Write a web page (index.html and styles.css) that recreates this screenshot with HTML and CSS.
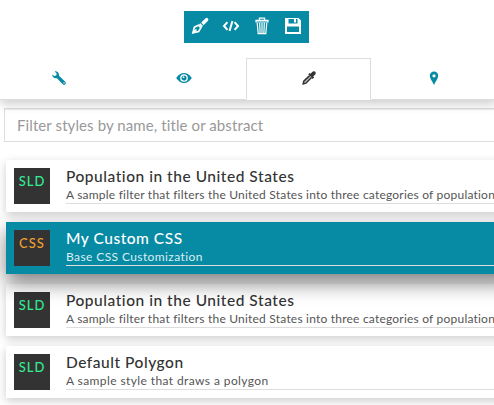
FILE: index.html
```html
<!DOCTYPE html>
<html lang="en">
<head>
<meta charset="utf-8">
<title>Styles</title>
<link rel="stylesheet" href="styles.css">
</head>
<body>
<header class="toolbar">
  <button class="tool" aria-label="Edit"><svg width="18" height="18" viewBox="0 0 18 18"><path fill="#fff" d="M10.2 5.500 14.600 1.200Q16 .3 17 1.500T16.800 4L12.500 8.200zM9.300 6.300l2.700 2.700-1.200 1.300-2.900-2.900z"/><path fill="none" stroke="#fff" stroke-width="1.700" d="M7.400 8.200 3.400 10.200 1.900 15.900 7.600 14.600 9.900 10.600zM2 16l3.500-3.500"/></svg></button>
  <button class="tool" aria-label="Code"><svg width="18" height="18" viewBox="0 0 18 18"><path fill="none" stroke="#fff" stroke-width="2" d="M5.400 5.200 2 9l3.400 3.800M12.600 5.200 16 9l-3.400 3.800M10.500 4 7.500 14"/></svg></button>
  <button class="tool" aria-label="Delete"><svg width="18" height="18" viewBox="0 0 18 18"><path fill="none" stroke="#fff" stroke-width="1.200" d="M6.400 3V1.100h5.200V3M3 5V3.400h12V5zM4.200 6l1 10.600h7.600l1-10.600M6.700 6l.4 10M9 6v10M11.300 6l-.4 10"/></svg></button>
  <button class="tool" aria-label="Save"><svg width="18" height="18" viewBox="0 0 18 18"><path fill="#fff" fill-rule="evenodd" d="M1 1h13.500L17 3.500V17H1zM4.500 2v4.500h9V2zM3 9.500V15h12V9.500z"/><path fill="#fff" d="M10 2h2v3.500h-2z"/></svg></button>
</header>
<nav class="tabs">
  <a class="tab tab-first"><svg width="16" height="16" viewBox="0 0 16 16"><path fill="#078aa3" d="M3.600 1.200C6.500.8 8.600 3.300 8 5.800l6.500 6.300q.8 1.200-.2 2.200t-2.300.3L5.900 8.200C3.500 8.700 1.200 7.300 1.200 4.600l2 1.500 2-.6.5-2z"/><circle cx="13" cy="12.900" r=".7" fill="#fff"/></svg></a>
  <a class="tab"><svg width="16" height="16" viewBox="0 0 16 16"><path fill="#078aa3" d="M.2 8Q3.500 3 8 3t7.800 5Q12.500 13 8 13T.2 8"/><circle cx="8" cy="8" r="3.200" fill="none" stroke="#fff" stroke-width="1.300"/><circle cx="7.500" cy="7.200" r=".9" fill="#fff"/></svg></a>
  <a class="tab tab-active"><svg width="16" height="16" viewBox="0 0 16 16"><path fill="#333" d="m7.300 4.300 1.300-1.300 1 .8 1.800-2c1.800-1.800 4.600.5 2.800 2.600l-2 2 .9 1.200-1.400 1.300z"/><path fill="#bbb" stroke="#333" stroke-width="1.500" d="m8.600 5.600-5.800 5.600-.6 2.700 2.700-.7 5.600-5.700"/></svg></a>
  <a class="tab"><svg width="16" height="16" viewBox="0 0 16 16"><path fill="#078aa3" fill-rule="evenodd" d="M8 1.500a4.200 4.200 0 0 1 4.200 4.200C12.200 8.500 9.700 11 8 15 6.300 11 3.800 8.500 3.800 5.700A4.200 4.200 0 0 1 8 1.500m0 2.700a1.600 1.600 0 1 0 0 3.200 1.600 1.600 0 0 0 0-3.200"/></svg></a>
</nav>
<main class="panel">
  <input class="filter" type="text" placeholder="Filter styles by name, title or abstract">
  <section class="list">
    <article class="card"><div class="format">SLD</div><div class="info"><h2 class="title">Population in the United States</h2><p class="abstract">A sample filter that filters the United States into three categories of population</p></div></article>
    <article class="card card-active"><div class="format format-css">CSS</div><div class="info"><h2 class="title">My Custom CSS</h2><p class="abstract abstract-short abstract-css">Base CSS Customization</p></div></article>
    <article class="card"><div class="format">SLD</div><div class="info"><h2 class="title">Population in the United States</h2><p class="abstract">A sample filter that filters the United States into three categories of population</p></div></article>
    <article class="card"><div class="format">SLD</div><div class="info"><h2 class="title">Default Polygon</h2><p class="abstract abstract-short">A sample style that draws a polygon</p></div></article>
  </section>
</main>
</body>
</html>
```
FILE: styles.css
```css
* { box-sizing: border-box; }
body {
  margin: 0;
  padding-top: 11px;
  width: 494px;
  height: 405px;
  overflow: hidden;
  background: #fff;
  color: #333;
  font-family: Lato, "Open Sans", sans-serif;
}
.toolbar {
  display: flex;
  width: 125px;
  height: 32px;
  margin-left: 184px;
  background: #078aa3;
}
.tool {
  display: flex;
  flex: 1;
  justify-content: center;
  padding: 6px 0 0;
  border: 0;
  background: none;
}
.tabs {
  display: flex;
  position: relative;
  z-index: 2;
  width: 496px;
  height: 42px;
  margin-top: 15px;
  background: #fff;
  border-bottom: 1px solid #ddd;
  box-shadow: 0 4px 10px rgba(0, 0, 0, .2);
  clip-path: inset(0 0 -16px);
}
.tab {
  display: flex;
  width: 125px;
  height: 42px;
  justify-content: center;
  padding-top: 12px;
}
.tab-first { width: 121px; padding-right: 3px; }
.tab-active {
  padding-top: 11px;
  border: 1px solid #ddd;
  border-bottom-color: #fff;
  background: #fff;
}
.panel { padding: 8px 0 0 4px; }
.filter {
  display: block;
  width: 510px;
  height: 34px;
  padding: 0 12px;
  border: 1px solid #ddd;
  border-radius: 0;
  background: #fff;
  box-shadow: inset 0 1px 1px rgba(0, 0, 0, .07);
  font: 15px Lato, sans-serif;
  letter-spacing: .1px;
}
.filter::placeholder { color: #999; opacity: 1; }
.list {
  display: flex;
  flex-direction: column;
  gap: 10px;
  width: 510px;
  margin: 18px 0 0 2px;
}
.card {
  display: flex;
  gap: 16px;
  height: 52px;
  padding: 8px;
  background: #fff;
  box-shadow: 0 3px 9px rgba(0, 0, 0, .2);
}
.card-active {
  position: relative;
  z-index: 1;
  background: #078aa3;
  box-shadow: 0 9px 20px rgba(0, 0, 0, .5);
  color: #fff;
}
.format {
  width: 36px;
  height: 36px;
  background: #333;
  color: #33eb93;
  font-size: 13px;
  font-weight: 500;
  letter-spacing: 1px;
  line-height: 27px;
  text-align: center;
}
.format-css { color: #f0a030; }
.info {
  flex: 1;
  height: 36px;
  border-bottom: 1px solid #ddd;
  white-space: nowrap;
}
.title {
  margin: -1px 0 0;
  font-size: 15.5px;
  font-weight: 500;
  line-height: 18px;
  letter-spacing: .53px;
}
.abstract {
  margin: 1px 0 0;
  color: #555;
  font-size: 12px;
  line-height: 18px;
  letter-spacing: .21px;
}
.abstract-short { letter-spacing: .4px; }
.abstract-css { color: #d9eff3; }
```
